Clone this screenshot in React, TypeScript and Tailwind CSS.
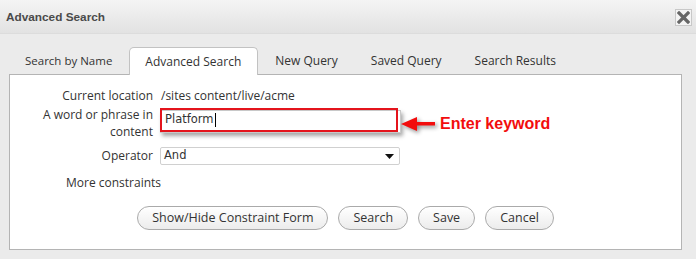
import React from "react";

const font = { fontFamily: '"Open Sans", "DejaVu Sans", sans-serif' };

export default function App() {
  const tabs = ["Search by Name", "Advanced Search", "New Query", "Saved Query", "Search Results"];
  return (
    <div className="w-[696px] h-[259px] bg-[#ebebeb] text-[#333] overflow-hidden" style={font}>
      {/* header */}
      <div className="h-[34px] flex items-center justify-between pl-[6px] pr-[4px] bg-gradient-to-b from-[#f4f4f4] to-[#e2e2e2] border-b border-[#dcdcdc]">
        <span className="mt-[3px] font-bold text-[#4a4a4a]" style={{ fontFamily: '"Liberation Sans", Arial, sans-serif', fontSize: 11.8 }}>Advanced Search</span>
        <div className="w-[17px] h-[17px] mt-[2px] border border-[#c8c8c8] bg-[#f4f4f4] flex items-center justify-center">
          <svg width="13" height="13" viewBox="0 0 13 13">
            <path d="M2 2 L11 11 M11 2 L2 11" stroke="#666" strokeWidth="3.2" strokeLinecap="square" />
          </svg>
        </div>
      </div>
      {/* tabs */}
      <div className="pl-[9px] pr-[14px] pt-[13px]">
        <div className="flex gap-[1px] h-[27px] items-end">
          {tabs.map((t, i) =>
            i === 1 ? (
              <div key={t} className="relative z-10 h-[28px] pl-[15px] pr-[16px] flex items-center bg-white border border-b-0 border-[#c2c2c2] rounded-t-[5px] text-[12px] text-[#333] -mb-[1px]">
                {t}
              </div>
            ) : (
              <div key={t} className={`h-[27px] px-[16px] flex items-center text-[#333] ${i === 0 ? "text-[11.5px]" : "text-[12px]"}`}>
                {t}
              </div>
            )
          )}
        </div>
        {/* panel */}
        <div className="relative bg-white border border-[#b4b4b4] h-[176px] pt-[11px]">
          <div className="flex items-center h-[20px]">
            <div className="w-[143px] text-right text-[12px]">Current location</div>
            <div className="ml-[8px] text-[12px]">/sites content/live/acme</div>
          </div>
          <div className="flex items-start">
            <div className="w-[143px] text-right text-[12px] leading-[17px]">
              A word or phrase in
              <br />
              content
            </div>
            <div className="ml-[7px] mt-[2px] relative">
              <div className="w-[241px] h-[23px] mt-[2px] border border-[#c8c8c8] shadow-[2px_3px_4px_rgba(0,0,0,0.35)] bg-white" />
              <div className="absolute left-0 top-0 w-[238px] h-[24px] border-2 border-[#e4141c] flex items-center pl-[3px]" style={{ fontFamily: '"DejaVu Sans", sans-serif', fontSize: 11.5 }}>
                Platform<span className="inline-block w-[1px] h-[14px] bg-black ml-[1px]" />
              </div>
            </div>
            <div className="mt-[10px] flex items-center">
              <svg width="36" height="14" viewBox="0 0 36 14" className="drop-shadow-[2px_2px_2px_rgba(0,0,0,0.45)]">
                <polygon points="0,7 16,0 16,5 34,5 34,8.5 16,8.5 16,14" fill="#f20d0d" />
              </svg>
              <span className="ml-[3px] text-[16px] font-bold text-[#f20d0d] leading-none" style={{ fontFamily: '"Liberation Sans", Arial, sans-serif' }}>Enter keyword</span>
            </div>
          </div>
          <div className="flex items-center mt-[7px]">
            <div className="w-[143px] text-right text-[12px]">Operator</div>
            <div className="ml-[7px] w-[240px] h-[18px] border border-[#d0d0d0] rounded-[2px] flex items-center justify-between pl-[3px] pr-[5px]" style={{ fontFamily: '"DejaVu Sans", sans-serif', fontSize: 11.5 }}>
              <span>And</span>
              <svg width="9" height="5" viewBox="0 0 9 5"><polygon points="0,0 9,0 4.5,5" fill="#111" /></svg>
            </div>
          </div>
          <div className="mt-[9px] pl-[56px] text-[12px]">More constraints</div>
          <div className="flex justify-center gap-[10px] mt-[14px]" style={{ fontFamily: '"Open Sans", sans-serif' }}>
            {["Show/Hide Constraint Form", "Search", "Save", "Cancel"].map((b) => (
              <button
                key={b}
                className="h-[24px] px-[14px] rounded-full border border-[#aaa] bg-gradient-to-b from-white to-[#ececec] text-[12.5px] text-[#333]"
              >
                {b}
              </button>
            ))}
          </div>
        </div>
      </div>
    </div>
  );
}
